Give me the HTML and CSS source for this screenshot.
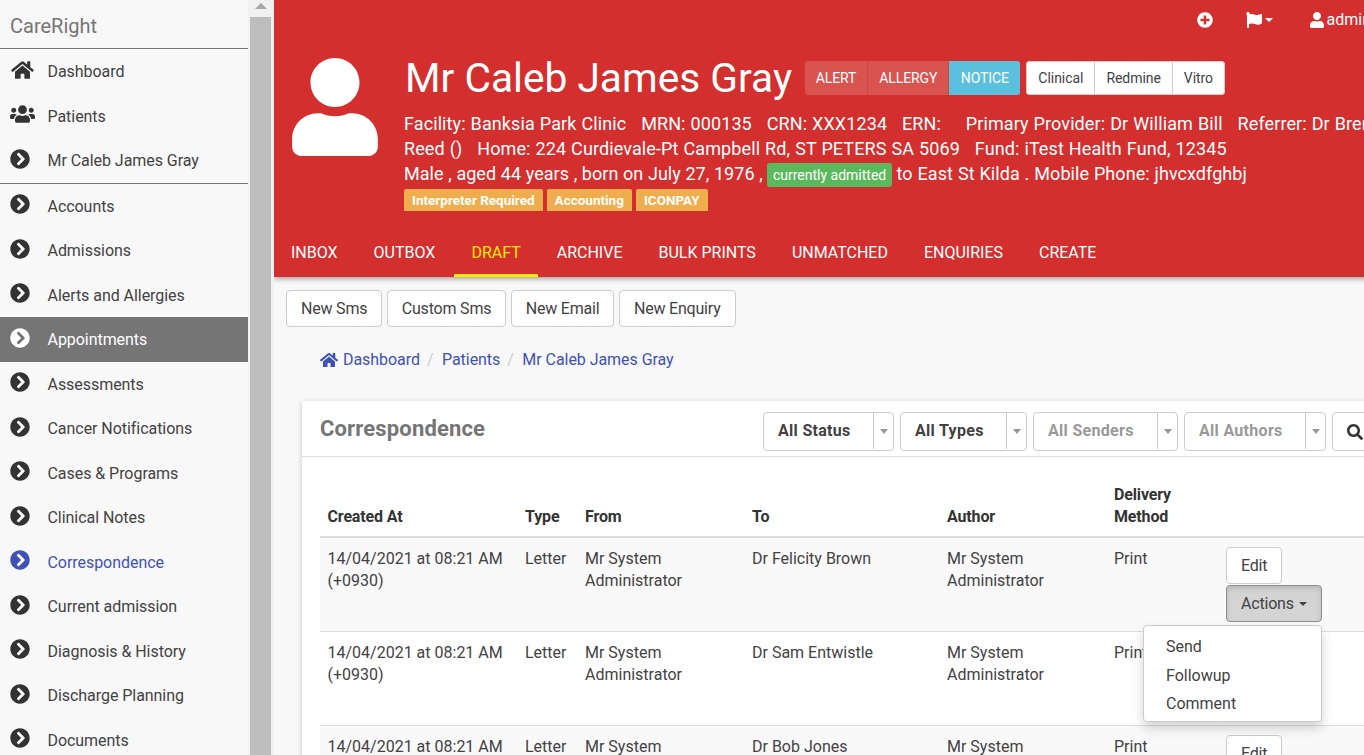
FILE: index.html
```html
<!DOCTYPE html>
<html lang="en">
<head>
<meta charset="utf-8">
<title>CareRight - Correspondence</title>
<link rel="stylesheet" href="styles.css">
</head>
<body>
<svg class="sprite" aria-hidden="true">
  <symbol id="i-chev" viewBox="0 0 512 512"><path d="M256 8c137 0 248 111 248 248S393 504 256 504 8 393 8 256 119 8 256 8zm113.900 231L234.400 103.500c-9.400-9.400-24.600-9.400-33.900 0l-17 17c-9.400 9.400-9.400 24.600 0 33.900L285.100 256 183.500 357.600c-9.400 9.400-9.400 24.600 0 33.900l17 17c9.400 9.400 24.600 9.400 33.900 0L369.900 273c9.400-9.400 9.400-24.600 0-34z"/></symbol>
  <symbol id="i-home" viewBox="0 0 576 512"><path d="M280.370 148.260L96 300.110V464a16 16 0 0 0 16 16l112.060-.29a16 16 0 0 0 15.920-16V368a16 16 0 0 1 16-16h64a16 16 0 0 1 16 16v95.640a16 16 0 0 0 16 16.050L464 480a16 16 0 0 0 16-16V300L295.670 148.260a12.190 12.190 0 0 0-15.300 0zM571.600 251.470L488 182.560V44.050a12 12 0 0 0-12-12h-56a12 12 0 0 0-12 12v72.610L318.470 43a48 48 0 0 0-61 0L4.340 251.470a12 12 0 0 0-1.600 16.900l25.500 31A12 12 0 0 0 45.150 301l235.220-193.740a12.190 12.190 0 0 1 15.300 0L530.900 301a12 12 0 0 0 16.900-1.600l25.500-31a12 12 0 0 0-1.700-16.930z"/></symbol>
  <symbol id="i-users" viewBox="0 0 640 512"><path d="M96 224c35.300 0 64-28.700 64-64s-28.700-64-64-64-64 28.700-64 64 28.700 64 64 64zm448 0c35.300 0 64-28.700 64-64s-28.700-64-64-64-64 28.700-64 64 28.700 64 64 64zm32 32h-64c-17.600 0-33.500 7.100-45.100 18.600 40.300 22.100 68.900 62 75.100 109.400h66c17.700 0 32-14.300 32-32v-32c0-35.300-28.700-64-64-64zm-256 0c61.900 0 112-50.100 112-112S381.900 32 320 32 208 82.100 208 144s50.100 112 112 112zm76.800 32h-8.300c-20.800 10-43.900 16-68.500 16s-47.600-6-68.500-16h-8.300C179.600 288 128 339.600 128 403.200V432c0 26.500 21.500 48 48 48h288c26.500 0 48-21.500 48-48v-28.800c0-63.600-51.600-115.200-115.200-115.200zm-223.700-13.400C161.500 263.100 145.600 256 128 256H64c-35.300 0-64 28.700-64 64v32c0 17.700 14.300 32 32 32h65.900c6.300-47.400 34.900-87.300 75.200-109.400z"/></symbol>
  <symbol id="i-user" viewBox="0 0 448 512"><path d="M224 256c70.700 0 128-57.300 128-128S294.700 0 224 0 96 57.300 96 128s57.300 128 128 128zm89.600 32h-16.700c-22.200 10.200-46.900 16-72.900 16s-50.600-5.800-72.900-16h-16.700C60.200 288 0 348.200 0 422.400V464c0 26.500 21.500 48 48 48h352c26.500 0 48-21.500 48-48v-41.600c0-74.200-60.200-134.400-134.400-134.400z"/></symbol>
  <symbol id="i-plus" viewBox="0 0 512 512"><path d="M256 8C119 8 8 119 8 256s111 248 248 248 248-111 248-248S393 8 256 8zm144 276c0 6.600-5.400 12-12 12h-92v92c0 6.600-5.400 12-12 12h-56c-6.600 0-12-5.400-12-12v-92h-92c-6.600 0-12-5.400-12-12v-56c0-6.600 5.400-12 12-12h92v-92c0-6.600 5.400-12 12-12h56c6.600 0 12 5.400 12 12v92h92c6.600 0 12 5.400 12 12v56z"/></symbol>
  <symbol id="i-flag" viewBox="0 0 512 512"><path d="M349.565 98.783C295.978 98.783 251.721 64 184.348 64c-24.955 0-47.309 4.384-68.045 12.013a55.947 55.947 0 0 0 3.586-23.562C118.117 24.015 94.806 1.206 66.338.048 34.345-1.254 8 24.296 8 56c0 19.026 9.497 35.825 24 45.945V488c0 13.255 10.745 24 24 24h16c13.255 0 24-10.745 24-24v-94.400c28.311-12.064 63.582-22.122 114.435-22.122 53.588 0 97.844 34.783 165.217 34.783 48.169 0 86.667-16.294 122.505-40.858C506.840 359.452 512 349.571 512 339.045v-243.100c0-23.393-24.269-38.870-45.485-29.016-34.338 15.948-76.454 31.854-116.950 31.854z"/></symbol>
  <symbol id="i-search" viewBox="0 0 512 512"><path d="M505 442.700L405.300 343c-4.500-4.500-10.600-7-17-7H372c27.600-35.300 44-79.700 44-128C416 93.100 322.900 0 208 0S0 93.100 0 208s93.100 208 208 208c48.300 0 92.700-16.400 128-44v16.300c0 6.400 2.500 12.500 7 17l99.700 99.700c9.400 9.400 24.600 9.400 33.900 0l28.300-28.300c9.400-9.400 9.400-24.600.1-34zM208 336c-70.700 0-128-57.200-128-128 0-70.700 57.200-128 128-128 70.700 0 128 57.200 128 128 0 70.700-57.200 128-128 128z"/></symbol>
</svg>

<aside class="sidebar">
  <div class="brand">CareRight</div>
  <ul class="nav-group">
    <li class="nav-item"><svg class="nav-icon wide"><use href="#i-home"/></svg><span>Dashboard</span></li>
    <li class="nav-item"><svg class="nav-icon wide"><use href="#i-users"/></svg><span>Patients</span></li>
    <li class="nav-item"><svg class="nav-icon"><use href="#i-chev"/></svg><span>Mr Caleb James Gray</span></li>
  </ul>
  <ul class="nav-group">
    <li class="nav-item"><svg class="nav-icon"><use href="#i-chev"/></svg><span>Accounts</span></li>
    <li class="nav-item"><svg class="nav-icon"><use href="#i-chev"/></svg><span>Admissions</span></li>
    <li class="nav-item"><svg class="nav-icon"><use href="#i-chev"/></svg><span>Alerts and Allergies</span></li>
    <li class="nav-item active"><svg class="nav-icon"><use href="#i-chev"/></svg><span>Appointments</span></li>
    <li class="nav-item"><svg class="nav-icon"><use href="#i-chev"/></svg><span>Assessments</span></li>
    <li class="nav-item"><svg class="nav-icon"><use href="#i-chev"/></svg><span>Cancer Notifications</span></li>
    <li class="nav-item"><svg class="nav-icon"><use href="#i-chev"/></svg><span>Cases &amp; Programs</span></li>
    <li class="nav-item"><svg class="nav-icon"><use href="#i-chev"/></svg><span>Clinical Notes</span></li>
    <li class="nav-item current"><svg class="nav-icon"><use href="#i-chev"/></svg><span>Correspondence</span></li>
    <li class="nav-item"><svg class="nav-icon"><use href="#i-chev"/></svg><span>Current admission</span></li>
    <li class="nav-item"><svg class="nav-icon"><use href="#i-chev"/></svg><span>Diagnosis &amp; History</span></li>
    <li class="nav-item"><svg class="nav-icon"><use href="#i-chev"/></svg><span>Discharge Planning</span></li>
    <li class="nav-item"><svg class="nav-icon"><use href="#i-chev"/></svg><span>Documents</span></li>
  </ul>
</aside>

<div class="scrollbar"><div class="scroll-arrow"></div><div class="scroll-thumb"></div></div>

<main class="main">
  <div class="main-inner">
    <header class="header">
      <div class="topbar">
        <svg class="top-icon plus"><use href="#i-plus"/></svg>
        <span class="top-flag"><svg class="top-icon"><use href="#i-flag"/></svg><i class="caret"></i></span>
        <span class="top-user"><svg class="top-icon user"><use href="#i-user"/></svg>admin</span>
      </div>
      <div class="hero">
        <svg class="avatar"><use href="#i-user"/></svg>
        <div class="hero-body">
          <div class="title-row">
            <h1 class="patient-name">Mr Caleb James Gray</h1>
            <div class="btn-group flags">
              <span class="seg danger">ALERT</span><span class="seg danger">ALLERGY</span><span class="seg info">NOTICE</span>
            </div>
            <div class="btn-group links">
              <span class="seg plain">Clinical</span><span class="seg plain">Redmine</span><span class="seg plain">Vitro</span>
            </div>
          </div>
          <div class="info-line">Facility: Banksia Park Clinic &nbsp; MRN: 000135 &nbsp; CRN: XXX1234 &nbsp; ERN: &nbsp; &nbsp; Primary Provider: Dr William Bill &nbsp; Referrer: Dr Brendan</div>
          <div class="info-line">Reed () &nbsp; Home: 224 Curdievale-Pt Campbell Rd, ST PETERS SA 5069 &nbsp; Fund: iTest Health Fund, 12345</div>
          <div class="info-line"><span class="tight">Male , aged 44 years , born on July 27, 1976 , </span><span class="admitted">currently admitted</span><span class="tail"> to East St Kilda . Mobile Phone: jhvcxdfghbj</span></div>
          <div class="labels">
            <span class="label">Interpreter Required</span><span class="label">Accounting</span><span class="label">ICONPAY</span>
          </div>
        </div>
      </div>
      <nav class="tabs">
        <a class="tab">INBOX</a><a class="tab">OUTBOX</a><a class="tab on">DRAFT</a><a class="tab">ARCHIVE</a><a class="tab">BULK PRINTS</a><a class="tab">UNMATCHED</a><a class="tab">ENQUIRIES</a><a class="tab">CREATE</a>
      </nav>
    </header>

    <div class="content">
      <div class="actions-row">
        <button class="btn">New Sms</button><button class="btn">Custom Sms</button><button class="btn">New Email</button><button class="btn">New Enquiry</button>
      </div>
      <ol class="crumbs">
        <li><svg class="crumb-home"><use href="#i-home"/></svg>Dashboard</li>
        <li>Patients</li>
        <li>Mr Caleb James Gray</li>
      </ol>

      <section class="card">
        <div class="card-head">
          <h2 class="card-title">Correspondence</h2>
          <div class="filters">
            <div class="select w-status"><span class="select-text">All Status</span><span class="select-arrow"></span></div>
            <div class="select w-types"><span class="select-text">All Types</span><span class="select-arrow"></span></div>
            <div class="select w-senders muted"><span class="select-text">All Senders</span><span class="select-arrow"></span></div>
            <div class="select w-authors muted"><span class="select-text">All Authors</span><span class="select-arrow"></span></div>
            <button class="search-btn"><svg class="search-icon"><use href="#i-search"/></svg></button>
          </div>
        </div>
        <div class="card-body">
          <table class="grid">
            <colgroup><col class="c1"><col class="c2"><col class="c3"><col class="c4"><col class="c5"><col class="c6"><col></colgroup>
            <thead>
              <tr><th>Created At</th><th>Type</th><th>From</th><th>To</th><th>Author</th><th>Delivery Method</th><th></th></tr>
            </thead>
            <tbody>
              <tr class="odd">
                <td>14/04/2021 at 08:21 AM (+0930)</td><td>Letter</td><td>Mr System Administrator</td><td>Dr Felicity Brown</td><td>Mr System Administrator</td><td>Print</td>
                <td class="cell-act">
                  <button class="btn row-btn">Edit</button>
                  <div class="drop">
                    <button class="btn row-btn pressed">Actions <i class="caret dark"></i></button>
                    <ul class="menu"><li>Send</li><li>Followup</li><li>Comment</li></ul>
                  </div>
                </td>
              </tr>
              <tr>
                <td>14/04/2021 at 08:21 AM (+0930)</td><td>Letter</td><td>Mr System Administrator</td><td>Dr Sam Entwistle</td><td>Mr System Administrator</td><td>Print</td>
                <td class="cell-act"><button class="btn row-btn">Edit</button><div class="drop"><button class="btn row-btn">Actions <i class="caret dark"></i></button></div></td>
              </tr>
              <tr class="odd">
                <td>14/04/2021 at 08:21 AM (+0930)</td><td>Letter</td><td>Mr System Administrator</td><td>Dr Bob Jones</td><td>Mr System Administrator</td><td>Print</td>
                <td class="cell-act"><button class="btn row-btn">Edit</button><div class="drop"><button class="btn row-btn">Actions <i class="caret dark"></i></button></div></td>
              </tr>
            </tbody>
          </table>
        </div>
      </section>
    </div>
  </div>
</main>
</body>
</html>
```

FILE: styles.css
```css
* { box-sizing: border-box; }
html, body { height: 100%; }
body {
  margin: 0;
  height: 755px;
  overflow: hidden;
  display: flex;
  font-family: Roboto, "Liberation Sans", sans-serif;
  font-size: 16px;
  line-height: 22px;
  color: #424242;
  background: #f8f8f8;
}
.sprite { display: none; }
ul, ol { list-style: none; margin: 0; padding: 0; }
svg { fill: currentColor; }

/* sidebar */
.sidebar { width: 248px; flex: none; background: #f8f8f8; height: 755px; overflow: hidden; }
.brand {
  height: 49px;
  padding: 14px 10px 0;
  font-size: 20px;
  line-height: 24px;
  color: #757575;
  border-bottom: 1px solid #757575;
}
.nav-group { border-bottom: 1px solid #757575; }
.nav-group:last-child { border-bottom: 0; }
.nav-item {
  height: 44.5px;
  display: flex;
  align-items: center;
  padding-left: 10px;
  color: #424242;
}
.nav-item > span { margin-left: 17.5px; padding-top: 2px; letter-spacing: -.05px; }
.nav-icon { width: 20px; height: 20px; margin-top: -3px; color: #333; }
.nav-icon.wide { width: 25px; margin-right: -5px; }
.nav-item.active { background: #757575; color: #fff; }
.nav-item.active .nav-icon { color: #fff; }
.nav-item.current, .nav-item.current .nav-icon { color: #3f51b5; }

/* browser scrollbar */
.scrollbar { width: 26px; flex: none; background: #f1f1f1; padding: 0 3px 0 2px; position: relative; }
.scroll-arrow {
  height: 17px;
  display: flex;
  justify-content: center;
  padding-top: 2px;
}
.scroll-arrow::before {
  content: "";
  border: 6px solid transparent;
  border-top: 0;
  border-bottom: 6px solid #a8a8a8;
  height: 0;
  margin-top: 1px;
}
.scroll-thumb { height: 738px; background: #bdbdbd; }

/* main */
.main { flex: 1; min-width: 0; overflow: hidden; height: 755px; }
.main-inner { width: 1121px; }

.header { background: #d32f2f; color: #fff; box-shadow: 0 2px 5px rgba(0,0,0,.35); height: 277px; position: relative; }
.topbar {
  height: 58px;
  padding: 12px 24px 0 0;
  display: flex;
  justify-content: flex-end;
  align-items: flex-start;
}
.top-icon { width: 16px; height: 16px; display: block; }
.top-flag { display: flex; align-items: center; margin-left: 33px; }
.top-user { display: flex; align-items: center; margin-left: 37px; height: 16px; font-size: 16px; }
.top-icon.user { width: 14px; margin-right: 3px; }
.caret {
  display: inline-block;
  width: 0;
  height: 0;
  margin-left: 3px;
  border: 4px solid transparent;
  border-bottom: 0;
  border-top: 4px solid #fff;
  vertical-align: middle;
}
.caret.dark { border-top-color: #424242; margin-left: 1px; }

.hero { display: flex; padding-left: 18px; }
.avatar { width: 86px; height: 98px; flex: none; color: #fff; }
.hero-body { margin-left: 26px; min-width: 0; }
.title-row { display: flex; align-items: center; height: 40px; margin-top: 0; margin-bottom: 13px; }
.patient-name { margin: 0 0 0 1px; font-size: 40.7px; line-height: 40px; font-weight: 400; white-space: nowrap; }
.btn-group { display: flex; height: 34px; border-radius: 3px; overflow: hidden; flex: none; }
.flags { margin-left: 12.5px; }
.links { margin-left: 6px; border: 1px solid #ccc; background: #fff; }
.seg { display: flex; align-items: center; font-size: 14px; line-height: 20px; letter-spacing: -.1px; }
.seg.danger { background: #d9534f; border-right: 1px solid #cf4742; padding: 0 11px; color: #fff; }
.seg.info { background: #5bc0de; color: #fff; padding: 0 11.5px; border-right: 0; }
.seg.plain { color: #424242; border-right: 1px solid #ccc; padding: 0 11px; letter-spacing: -.05px; }
.seg.plain:last-child { border-right: 0; }

.info-line { font-size: 18px; line-height: 25px; white-space: nowrap; letter-spacing: .1px; word-spacing: .4px; }
.tight { letter-spacing: .03px; word-spacing: .15px; }
.tail { letter-spacing: .06px; word-spacing: .35px; }
.admitted {
  display: inline-block;
  background: #5cb85c;
  border-radius: 3px;
  font-size: 14px;
  line-height: 24px;
  padding: 0 5.5px;
  letter-spacing: 0;
  word-spacing: 0;
}
.labels { display: flex; gap: 4px; margin-top: 2px; }
.label {
  background: #f0ad4e;
  color: #fff;
  font-size: 13.500px;
  font-weight: 700;
  line-height: 22px;
  height: 22px;
  padding: 0 8px;
  border-radius: 2px 2px 0 0;
  white-space: nowrap;
}

.tabs { display: flex; position: absolute; left: -1px; bottom: 0; height: 49px; }
.tab {
  display: flex;
  align-items: center;
  margin: 0 1px;
  padding: 4px 17px 0;
  height: 49px;
  font-size: 16px;
  color: #fff;
  border-bottom: 3px solid transparent;
  white-space: nowrap;
}
.tab.on { color: #ffeb00; border-bottom-color: #ffeb00; }

/* content */
.content { padding: 13px 0 0 0; }
.actions-row { display: flex; gap: 4.5px; padding-left: 12px; }
.btn {
  font: inherit;
  color: #424242;
  background: #fff;
  border: 1px solid #ccc;
  border-radius: 4px;
  height: 37px;
  padding: 0 14px;
  white-space: nowrap;
  letter-spacing: -.2px;
}
.crumbs { display: flex; padding: 22px 0 0 46px; height: 74px; color: #3f51b5; letter-spacing: -.05px; }
.crumbs li { display: flex; height: 22px; }
.crumbs li + li::before { content: "/"; color: #ccc; padding: 0 8.500px 0 7px; }
.crumb-home { width: 18px; height: 16px; margin: 3px 5px 0 0; }

.card { margin-left: 28px; background: #fff; box-shadow: 0 1px 5px rgba(0,0,0,.2); }
.card-head {
  height: 56px;
  display: flex;
  justify-content: space-between;
  padding: 11px 18px 0;
  border-bottom: 1px solid #ddd;
}
.card-title { margin: 5px 0 0; font-size: 22px; line-height: 24px; font-weight: 700; color: #757575; letter-spacing: .15px; }
.filters { display: flex; gap: 6px; height: 39px; }
.select {
  display: flex;
  justify-content: space-between;
  height: 39px;
  border: 1px solid #ccc;
  border-radius: 4px;
  background: #fff;
  font-weight: 700;
  color: #424242;
  letter-spacing: .3px;
}
.select.muted { color: #999; }
.select-text { padding: 7px 0 0 14px; }
.select-arrow { width: 20px; border-left: 1px solid #ccc; height: 36px; display: flex; align-items: center; justify-content: center; }
.select-arrow::before { content: ""; border: 4px solid transparent; border-top: 5px solid #999; border-bottom: 0; margin-top: 1px; }
.w-status { width: 131px; }
.w-types { width: 127px; }
.w-senders { width: 145px; }
.w-authors { width: 142px; }
.search-btn {
  width: 45px;
  height: 39px;
  border: 1px solid #ccc;
  border-radius: 4px;
  background: #fff;
  padding: 0;
  color: #333;
  display: flex;
  align-items: center;
  justify-content: center;
}
.search-icon { width: 16px; height: 16px; }

.card-body { padding: 19px 18px 0 17.5px; }
.grid { width: 100%; border-collapse: collapse; table-layout: fixed; }
.c1 { width: 197.5px; }
.c2 { width: 60px; }
.c3 { width: 167px; }
.c4 { width: 195px; }
.c5 { width: 167px; }
.c6 { width: 112px; }
.grid th {
  text-align: left;
  vertical-align: bottom;
  padding: 8px;
  font-weight: 700;
  color: #333;
  letter-spacing: -.15px;
  border-bottom: 2px solid #ddd;
}
.grid td { padding: 10px 8px 9px; vertical-align: top; border-bottom: 1px solid #ddd; color: #424242; }
.grid td.cell-act { padding: 9px 8px; }
.grid tr.odd td { background: #f9f9f9; }
.row-btn { display: block; }
.drop { position: relative; width: 96px; margin-top: 1px; }
.pressed { background: #d4d4d4; border-color: #8c8c8c; box-shadow: inset 0 3px 5px rgba(0,0,0,.125); }
.menu {
  position: absolute;
  right: 0;
  top: 40px;
  width: 179px;
  padding: 7px 0 3px;
  background: #fff;
  border: 1px solid #ccc;
  border-radius: 4px;
  box-shadow: 0 6px 12px rgba(0,0,0,.175);
  z-index: 5;
}
.menu li { padding: 3.200px 22px; letter-spacing: 0; }
```
